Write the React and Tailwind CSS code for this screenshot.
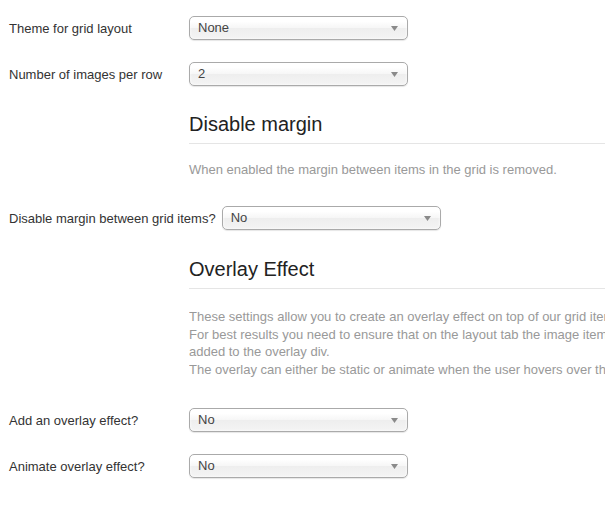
import React from 'react';

const selectBox =
    "relative flex items-center h-[24px] w-[219px] shrink-0 rounded-[5px] border border-[#aaaaaa] bg-[linear-gradient(#ffffff_20%,#f6f6f6_50%,#eeeeee_52%,#f4f4f4_100%)] shadow-[0_1px_1px_rgba(0,0,0,0.1),inset_0_0_3px_#ffffff] pl-[8px] text-[13px] text-[#444444]";

function Select({ value }) {
    return (
        <div className={selectBox}>
            <span className="leading-[22px]">{value}</span>
            <svg className="absolute right-[9px] top-[9px]" width="7" height="5" viewBox="0 0 7 5">
                <path d="M0 0 H7 L3.5 5 Z" fill="#8a8a8a" />
            </svg>
        </div>
    );
}

function Row({ label, value, className = '' }) {
    return (
        <div className={`flex items-center h-[24px] ${className}`}>
            <div className="w-[180px] shrink-0 pt-[2px] text-[13px] text-[#333333]">{label}</div>
            <Select value={value} />
        </div>
    );
}

function Heading({ children, className = '' }) {
    return (
        <div className={`ml-[180px] w-[600px] border-b border-[#e5e5e5] pb-[7px] text-[20px] leading-[24px] text-[#222222] ${className}`}>
            {children}
        </div>
    );
}

export default function App() {
    return (
        <div className="w-[605px] h-[525px] overflow-hidden bg-white pl-[9px] pt-[16px] font-['Liberation_Sans',Arial,sans-serif] whitespace-nowrap">
            <Row label="Theme for grid layout" value="None" />
            <Row label="Number of images per row" value="2" className="mt-[22px]" />

            {/* Disable margin */}
            <Heading className="mt-[26px]">Disable margin</Heading>
            <p className="ml-[180px] mt-[17px] text-[13px] leading-[18px] text-[#999999]">
                When enabled the margin between items in the grid is removed.
            </p>
            <div className="flex items-center h-[24px] mt-[27px] gap-[6px]">
                <div className="pt-[1px] text-[13px] text-[#333333]">Disable margin between grid items?</div>
                <Select value="No" />
            </div>

            {/* Overlay Effect */}
            <Heading className="mt-[27px]">Overlay Effect</Heading>
            <div className="ml-[180px] mt-[19px] w-[416px] overflow-hidden text-[13px] leading-[17.5px] text-[#999999]">
                <div>These settings allow you to create an overlay effect on top of our grid items.</div>
                <div>For best results you need to ensure that on the layout tab the image item is</div>
                <div>added to the overlay div.</div>
                <div>The overlay can either be static or animate when the user hovers over the item.</div>
            </div>

            <Row label="Add an overlay effect?" value="No" className="mt-[30px]" />
            <Row label="Animate overlay effect?" value="No" className="mt-[22px]" />
        </div>
    );
}
